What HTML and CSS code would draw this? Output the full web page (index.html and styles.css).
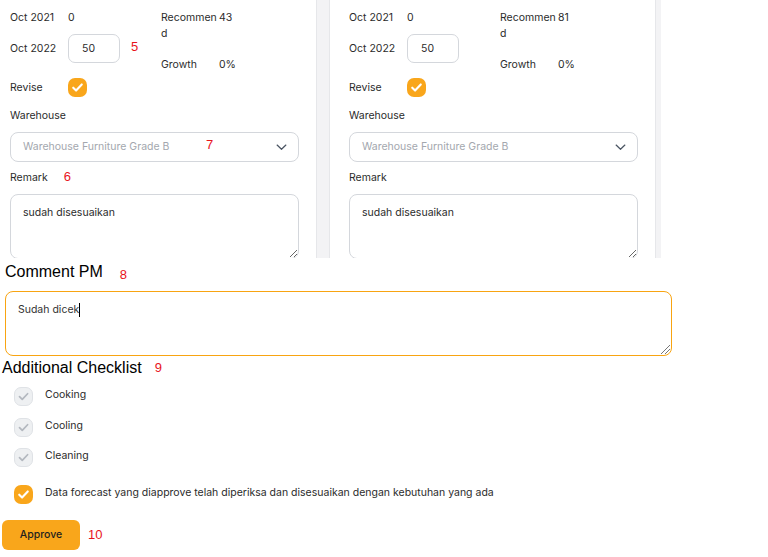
FILE: index.html
```html
<!DOCTYPE html>
<html lang="id">
<head>
<meta charset="utf-8">
<title>Approval</title>
<link rel="stylesheet" href="styles.css">
</head>
<body>
<div class="viewport">
  <div class="scroller">
    <div class="card">
      <div class="stats">
        <div class="stat-left">
          <div class="row r1"><span class="lbl">Oct 2021</span><span>0</span></div>
          <div class="row r2"><span class="lbl">Oct 2022</span><input class="qty" type="text" value="50"><span class="mark m5">5</span></div>
          <div class="row r3"><span class="lbl">Revise</span><span class="check on"><svg viewBox="0 0 20 20" width="19" height="19"><path d="M5.5 10.2l3 3 6-6.4" fill="none" stroke="#fff" stroke-width="2.2" stroke-linecap="round" stroke-linejoin="round"/></svg></span></div>
        </div>
        <div class="stat-right">
          <div class="row r1"><span class="lbl wrap">Recommend</span><span>43</span></div>
          <div class="row growth"><span class="lbl">Growth</span><span>0%</span></div>
        </div>
      </div>
      <div class="field-label">Warehouse</div>
      <div class="select">
        <span class="placeholder">Warehouse Furniture Grade B</span>
        <span class="mark m7">7</span>
        <svg class="chev" viewBox="0 0 12 8" width="11" height="7"><path d="M1 1.2l5 4.8 5-4.8" fill="none" stroke="#4b5563" stroke-width="1.4" stroke-linecap="round" stroke-linejoin="round"/></svg>
      </div>
      <div class="field-label">Remark<span class="mark m6">6</span></div>
      <textarea class="remark">sudah disesuaikan</textarea>
    </div>
    <div class="card">
      <div class="stats">
        <div class="stat-left">
          <div class="row r1"><span class="lbl">Oct 2021</span><span>0</span></div>
          <div class="row r2"><span class="lbl">Oct 2022</span><input class="qty" type="text" value="50"></div>
          <div class="row r3"><span class="lbl">Revise</span><span class="check on"><svg viewBox="0 0 20 20" width="19" height="19"><path d="M5.5 10.2l3 3 6-6.4" fill="none" stroke="#fff" stroke-width="2.2" stroke-linecap="round" stroke-linejoin="round"/></svg></span></div>
        </div>
        <div class="stat-right">
          <div class="row r1"><span class="lbl wrap">Recommend</span><span>81</span></div>
          <div class="row growth"><span class="lbl">Growth</span><span>0%</span></div>
        </div>
      </div>
      <div class="field-label">Warehouse</div>
      <div class="select">
        <span class="placeholder">Warehouse Furniture Grade B</span>
        <svg class="chev" viewBox="0 0 12 8" width="11" height="7"><path d="M1 1.2l5 4.8 5-4.8" fill="none" stroke="#4b5563" stroke-width="1.4" stroke-linecap="round" stroke-linejoin="round"/></svg>
      </div>
      <div class="field-label">Remark</div>
      <textarea class="remark">sudah disesuaikan</textarea>
    </div>
  </div>
</div>

<h2 class="heading h-comment">Comment PM<span class="mark m8">8</span></h2>
<div class="comment"><span>Sudah dicek</span><span class="caret"></span></div>

<h2 class="heading h-check">Additional Checklist<span class="mark m9">9</span></h2>
<ul class="checklist">
  <li class="item"><span class="check off"><svg viewBox="0 0 20 20" width="19" height="19"><path d="M5.8 10.2l2.9 2.9 5.6-6" fill="none" stroke="#b3b8bf" stroke-width="1.8" stroke-linecap="round" stroke-linejoin="round"/></svg></span><span>Cooking</span></li>
  <li class="item"><span class="check off"><svg viewBox="0 0 20 20" width="19" height="19"><path d="M5.8 10.2l2.9 2.9 5.6-6" fill="none" stroke="#b3b8bf" stroke-width="1.8" stroke-linecap="round" stroke-linejoin="round"/></svg></span><span>Cooling</span></li>
  <li class="item"><span class="check off"><svg viewBox="0 0 20 20" width="19" height="19"><path d="M5.8 10.2l2.9 2.9 5.6-6" fill="none" stroke="#b3b8bf" stroke-width="1.8" stroke-linecap="round" stroke-linejoin="round"/></svg></span><span>Cleaning</span></li>
  <li class="item confirm"><span class="check on"><svg viewBox="0 0 20 20" width="19" height="19"><path d="M5.5 10.2l3 3 6-6.4" fill="none" stroke="#fff" stroke-width="2.2" stroke-linecap="round" stroke-linejoin="round"/></svg></span><span>Data forecast yang diapprove telah diperiksa dan disesuaikan dengan kebutuhan yang ada</span></li>
</ul>

<div class="actions">
  <button class="approve" type="button">Approve</button>
  <span class="mark m10">10</span>
</div>
</body>
</html>
```

FILE: styles.css
```css
* { box-sizing: border-box; }

html, body {
  margin: 0;
  padding: 0;
  background: #ffffff;
}

body {
  font-family: Inter, "Noto Sans", sans-serif;
  font-size: 10.5px;
  line-height: 16px;
  color: #2b2b2b;
  width: 768px;
  height: 557px;
  overflow: hidden;
}

.viewport {
  height: 258px;
  overflow: hidden;
}

.scroller {
  display: flex;
  gap: 12px;
  width: max-content;
  margin-left: -10px;
  padding-right: 5px;
  background: #f3f3f5;
  height: 258px;
}

.card {
  width: 327px;
  background: #ffffff;
  padding: 10px 17px 0 19px;
  border-left: 1px solid #e6e7ea;
  border-right: 1px solid #e6e7ea;
}

.stats {
  display: flex;
}

.stat-left {
  width: 151px;
  display: flex;
  flex-direction: column;
}

.stat-right {
  display: flex;
  flex-direction: column;
}

.row {
  display: flex;
  align-items: center;
}

.row.r1 { align-items: flex-start; }
.row.r2 { margin-top: 8px; height: 29px; }
.row.r3 { margin-top: 15px; height: 19px; }
.row.growth { margin-top: 15px; }

.lbl {
  width: 58px;
  flex: none;
}

.lbl.wrap {
  word-break: break-all;
  padding-right: 2px;
}

.qty {
  width: 52px;
  height: 29px;
  border: 1px solid #d4d7dc;
  border-radius: 7px;
  padding: 0 0 0 13px;
  font-family: inherit;
  font-size: 10.5px;
  color: #2b2b2b;
  background: #fff;
  outline: none;
}

.check {
  width: 19px;
  height: 19px;
  border-radius: 7px;
  display: inline-flex;
  flex: none;
}

.check.on {
  background: #f9a61b;
}

.check.off {
  background: #eef0f2;
  border: 1px solid #dfe2e6;
}

.check.off svg { margin: -1px; }

.field-label {
  margin-top: 11px;
  display: flex;
  align-items: center;
}

.select + .field-label { margin-top: 8px; }

.select {
  position: relative;
  margin-top: 8px;
  height: 30px;
  border: 1px solid #d4d7dc;
  border-radius: 8px;
  display: flex;
  align-items: center;
  justify-content: space-between;
  padding: 0 11px 0 12px;
}

.placeholder {
  color: #a3a7ae;
}

.chev { flex: none; }

.remark {
  display: block;
  margin-top: 8px;
  width: 100%;
  height: 65px;
  border: 1px solid #d4d7dc;
  border-radius: 8px;
  padding: 10px 12px;
  font-family: inherit;
  font-size: 10.5px;
  line-height: 16px;
  color: #2b2b2b;
  resize: vertical;
  outline: none;
}

.mark {
  color: #e8141c;
  font-family: "Liberation Sans", Arial, sans-serif;
  font-size: 13px;
  line-height: 16px;
}

.m5 { margin-left: 11px; margin-top: -3px; }
.m6 { margin-left: 16px; margin-top: -2px; }
.m7 { position: absolute; left: 195px; top: 4px; }
.m8 { margin-left: 17px; margin-top: 5px; }
.m9 { margin-left: 13px; }
.m10 { margin-left: 8px; }

.heading {
  font-family: "Liberation Sans", Arial, sans-serif;
  font-weight: normal;
  font-size: 16px;
  line-height: 18px;
  height: 18px;
  color: #000;
  margin: 0;
  display: flex;
  align-items: center;
}

.h-comment {
  margin-top: 5px;
  padding-left: 5px;
}

.comment {
  position: relative;
  margin: 10px 0 0 5px;
  width: 667px;
  height: 65px;
  border: 1px solid #f8a412;
  border-radius: 8px;
  padding: 10px 12px;
  font-size: 10.5px;
  line-height: 16px;
  color: #333;
  display: flex;
  align-items: flex-start;
}

.comment::after {
  content: "";
  position: absolute;
  right: 1px;
  bottom: 1px;
  width: 9px;
  height: 9px;
  background: linear-gradient(135deg, transparent 45%, #777 45%, #777 52%, transparent 52%, transparent 70%, #777 70%, #777 77%, transparent 77%);
}

.caret {
  display: inline-block;
  width: 1px;
  height: 14px;
  margin-top: 1px;
  background: #000;
}

.h-check {
  margin-top: 3px;
  padding-left: 2px;
}

.checklist {
  list-style: none;
  margin: 10px 0 0 0;
  padding: 0 0 0 14px;
  display: flex;
  flex-direction: column;
  gap: 11.5px;
}

.item {
  display: flex;
  align-items: flex-start;
  gap: 12px;
  height: 19px;
}

.item.confirm {
  margin-top: 6px;
}

.actions {
  display: flex;
  align-items: center;
  margin-top: 16px;
  padding-left: 2px;
}

.approve {
  width: 78px;
  height: 30px;
  border: none;
  border-radius: 6px;
  background: #f9a61b;
  font-family: inherit;
  font-size: 10.5px;
  font-weight: 500;
  color: #1f1f1f;
  padding: 0;
}
```
